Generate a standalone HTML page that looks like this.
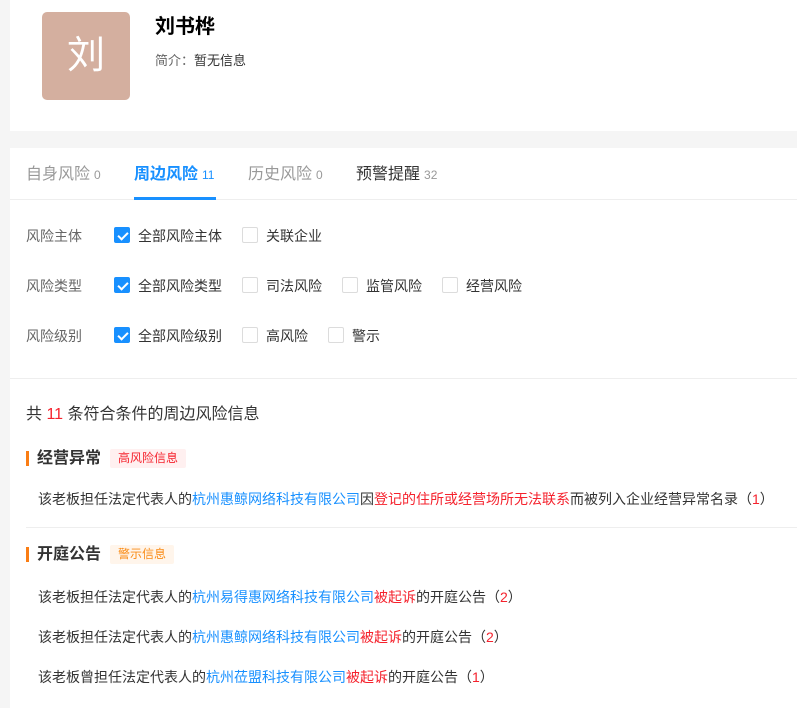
<!DOCTYPE html>
<html><head><meta charset="utf-8"><style>
*{margin:0;padding:0;box-sizing:border-box}
body{width:797px;height:703px;overflow:hidden;background:#f5f5f5;font-family:"Liberation Sans","Noto Sans CJK SC",sans-serif;color:#333;position:relative}
.abs{position:absolute;white-space:nowrap}
.card1{position:absolute;left:10px;top:0;width:800px;height:131px;background:#fff}
.card2{position:absolute;left:10px;top:148px;width:800px;height:560px;background:#fff}
.av{position:absolute;left:42px;top:12px;width:88px;height:88px;background:#d4af9f;border-radius:5px;color:#fff;font-size:38px;text-align:center;line-height:88px}
.tab{font-size:16px;color:#999;top:164px;line-height:22px}
.tab small{font-size:12px;margin-left:4px}
.lbl{font-size:14px;color:#666;left:26px;line-height:18px}
.cb{position:absolute;width:16px;height:16px;border:1px solid #dcdcdc;border-radius:2px;background:#fff}
.cb.on{background:#1890ff;border-color:#1890ff}
.cb.on:after{content:"";position:absolute;left:5px;top:2px;width:4px;height:8px;border:solid #fff;border-width:0 2px 2px 0;transform:rotate(45deg)}
.opt{font-size:14px;color:#333;line-height:18px}
.item{font-size:14px;color:#333;left:38px;line-height:18px}
.b{color:#1890ff}.r{color:#f5222d}
</style></head><body>
<div class="card1"></div>
<div class="av">刘</div>
<div class="abs" style="left:155px;top:14px;font-size:20px;font-weight:bold;color:#000;line-height:26px">刘书桦</div>
<div class="abs" style="left:155px;top:52px;font-size:13px;line-height:18px"><span style="color:#666">简介：</span>暂无信息</div>
<div class="card2"></div>
<div class="abs tab" style="left:26px">自身风险<small>0</small></div>
<div class="abs tab" style="left:134px;color:#1890ff;font-weight:bold">周边风险<small style="font-weight:normal">11</small></div>
<div class="abs tab" style="left:248px">历史风险<small>0</small></div>
<div class="abs tab" style="left:356px;color:#333">预警提醒<small style="color:#999">32</small></div>
<div class="abs" style="left:10px;top:199px;width:790px;height:1px;background:#eee"></div>
<div class="abs" style="left:134px;top:197px;width:82px;height:3px;background:#1890ff"></div>

<div class="abs lbl" style="top:227px">风险主体</div>
<div class="cb on" style="left:114px;top:227px"></div><div class="abs opt" style="left:138px;top:227px">全部风险主体</div>
<div class="cb" style="left:242px;top:227px"></div><div class="abs opt" style="left:266px;top:227px">关联企业</div>

<div class="abs lbl" style="top:277px">风险类型</div>
<div class="cb on" style="left:114px;top:277px"></div><div class="abs opt" style="left:138px;top:277px">全部风险类型</div>
<div class="cb" style="left:242px;top:277px"></div><div class="abs opt" style="left:266px;top:277px">司法风险</div>
<div class="cb" style="left:342px;top:277px"></div><div class="abs opt" style="left:366px;top:277px">监管风险</div>
<div class="cb" style="left:442px;top:277px"></div><div class="abs opt" style="left:466px;top:277px">经营风险</div>

<div class="abs lbl" style="top:327px">风险级别</div>
<div class="cb on" style="left:114px;top:327px"></div><div class="abs opt" style="left:138px;top:327px">全部风险级别</div>
<div class="cb" style="left:242px;top:327px"></div><div class="abs opt" style="left:266px;top:327px">高风险</div>
<div class="cb" style="left:328px;top:327px"></div><div class="abs opt" style="left:352px;top:327px">警示</div>

<div class="abs" style="left:10px;top:378px;width:790px;height:1px;background:#eee"></div>
<div class="abs" style="left:26px;top:404px;font-size:16px;line-height:22px">共 <span class="r">11</span> 条符合条件的周边风险信息</div>

<div class="abs" style="left:26px;top:451px;width:3px;height:15px;background:#fa7d14"></div>
<div class="abs" style="left:37px;top:448px;font-size:16px;font-weight:bold;line-height:22px">经营异常</div>
<div class="abs" style="left:110px;top:449px;width:76px;height:19px;background:#fff0f0;color:#f5222d;font-size:12px;line-height:19px;text-align:center;border-radius:2px">高风险信息</div>
<div class="abs item" style="top:490px">该老板担任法定代表人的<span class="b">杭州惠鲸网络科技有限公司</span>因<span class="r">登记的住所或经营场所无法联系</span>而被列入企业经营异常名录（<span class="r">1</span>）</div>
<div class="abs" style="left:26px;top:527px;width:780px;height:1px;background:#eee"></div>

<div class="abs" style="left:26px;top:547px;width:3px;height:15px;background:#fa7d14"></div>
<div class="abs" style="left:37px;top:544px;font-size:16px;font-weight:bold;line-height:22px">开庭公告</div>
<div class="abs" style="left:110px;top:545px;width:64px;height:19px;background:#fff5eb;color:#fa8c16;font-size:12px;line-height:19px;text-align:center;border-radius:2px">警示信息</div>
<div class="abs item" style="top:588px">该老板担任法定代表人的<span class="b">杭州易得惠网络科技有限公司</span><span class="r">被起诉</span>的开庭公告（<span class="r">2</span>）</div>
<div class="abs item" style="top:628px">该老板担任法定代表人的<span class="b">杭州惠鲸网络科技有限公司</span><span class="r">被起诉</span>的开庭公告（<span class="r">2</span>）</div>
<div class="abs item" style="top:668px">该老板曾担任法定代表人的<span class="b">杭州莅盟科技有限公司</span><span class="r">被起诉</span>的开庭公告（<span class="r">1</span>）</div>
</body></html>
